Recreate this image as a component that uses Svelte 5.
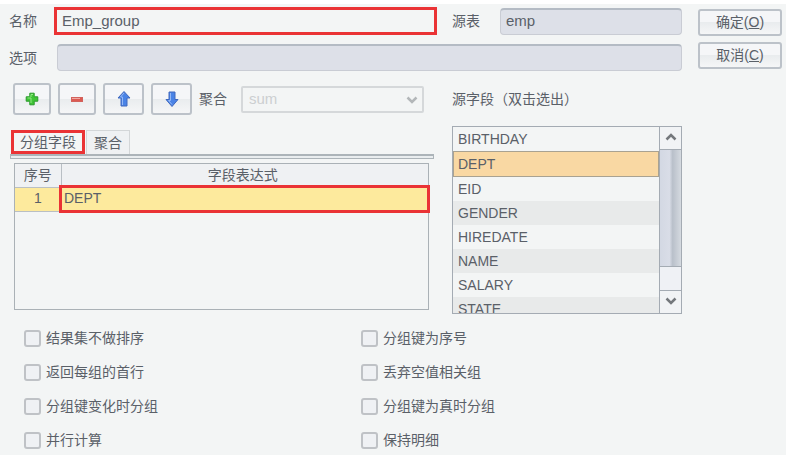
<script>
    let name = "Emp_group";
    let source = "emp";
    let option = "";
    let aggregate = "sum";
    let activeTab = "group";
    let selectedField = "DEPT";

    let groups = ["DEPT"];

    const fields = [
        "BIRTHDAY",
        "DEPT",
        "EID",
        "GENDER",
        "HIREDATE",
        "NAME",
        "SALARY",
        "STATE",
    ];

    let options = [
        { id: "o", label: "结果集不做排序", checked: false },
        { id: "n", label: "分组键为序号", checked: false },
        { id: "first", label: "返回每组的首行", checked: false },
        { id: "null", label: "丢弃空值相关组", checked: false },
        { id: "change", label: "分组键变化时分组", checked: false },
        { id: "true", label: "分组键为真时分组", checked: false },
        { id: "parallel", label: "并行计算", checked: false },
        { id: "detail", label: "保持明细", checked: false },
    ];

    function addGroup() {
        groups = [...groups, selectedField];
    }

    function removeGroup() {
        groups = groups.slice(0, -1);
    }

    function pickField(field) {
        groups = [...groups, field];
    }

    function handleKeydown(e, field) {
        if (e.key === "Enter") {
            pickField(field);
        }
    }
</script>

<div class="dialog">
    <div class="main">
        <div class="row name-row">
            <div class="field">
                <label for="name">名称</label>
                <input id="name" class="marked" type="text" bind:value={name} />
            </div>
            <div class="field source">
                <label for="source">源表</label>
                <input id="source" type="text" value={source} readonly />
            </div>
        </div>

        <div class="field option-row">
            <label for="option">选项</label>
            <input id="option" type="text" value={option} readonly />
        </div>

        <div class="row tool-row">
            <div class="toolbar">
                <button class="tool" aria-label="增加" on:click={addGroup}>
                    <svg width="14" height="14" viewBox="0 0 14 14">
                        <path d="M4.800 1.200h4.400v3.600h3.600v4.400H9.200v3.600H4.800V9.200H1.200V4.800h3.600z" fill="#3fc435" stroke="#2a9a2c" stroke-linejoin="round" />
                        <path d="M6 11V6H2.500M6 5V2.500h2" fill="none" stroke="#92e884" />
                    </svg>
                </button>
                <button class="tool" aria-label="删除" on:click={removeGroup}>
                    <svg width="14" height="14" viewBox="0 0 14 14">
                        <rect x="1.500" y="5.500" width="11" height="4" fill="#dc5a52" stroke="#d2625c" />
                        <path d="M2 6.500h8" stroke="#f0a8a2" />
                    </svg>
                </button>
                <button class="tool wide" aria-label="上移">
                    <svg width="16" height="18" viewBox="0 0 16 18">
                        <path d="M8 1.500l6 6.500h-3v8H5V8H2z" fill="#4a83e6" stroke="#4068bd" stroke-linejoin="round" />
                        <path d="M8 3L4.500 7H6.500v8" fill="none" stroke="#94b8f5" />
                    </svg>
                </button>
                <button class="tool wide" aria-label="下移">
                    <svg width="16" height="18" viewBox="0 0 16 18">
                        <path d="M5 2h6v7.500h3L8 16.500 2 9.500h3z" fill="#4a83e6" stroke="#4068bd" stroke-linejoin="round" />
                        <path d="M6.500 3v7.500H4.500L8 14.500" fill="none" stroke="#94b8f5" />
                    </svg>
                </button>
                <label for="aggregate">聚合</label>
                <div class="combo">
                    <select id="aggregate" bind:value={aggregate} disabled>
                        <option value="sum">sum</option>
                        <option value="count">count</option>
                    </select>
                    <svg class="combo-arrow" width="12" height="8" viewBox="0 0 12 8">
                        <path d="M1.500 1.500L6 6l4.500-4.500" fill="none" stroke="#b3b7b9" stroke-width="2.500" />
                    </svg>
                </div>
            </div>
            <div class="side" id="fields-title">源字段（双击选出）</div>
        </div>

        <div class="row lists">
            <div class="tab-panel">
                <div class="tabs" role="tablist">
                    <button
                        role="tab"
                        class="tab marked"
                        aria-selected={activeTab === "group"}
                        on:click={() => (activeTab = "group")}>分组字段</button
                    >
                    <button
                        role="tab"
                        class="tab"
                        aria-selected={activeTab === "aggregate"}
                        on:click={() => (activeTab = "aggregate")}>聚合</button
                    >
                </div>
                <div class="tab-edge"></div>
                <div class="table-box">
                    <table>
                        <thead>
                            <tr>
                                <th class="index">序号</th>
                                <th>字段表达式</th>
                            </tr>
                        </thead>
                        <tbody>
                            {#each groups as group, i}
                                <tr>
                                    <td class="index">{i + 1}</td>
                                    <td class="expression">{group}</td>
                                </tr>
                            {/each}
                        </tbody>
                    </table>
                </div>
            </div>

            <div class="side field-box">
                <ul class="fields" role="listbox" aria-labelledby="fields-title">
                    {#each fields as field (field)}
                        <li
                            role="option"
                            tabindex="0"
                            aria-selected={field === selectedField}
                            class:selected={field === selectedField}
                            on:click={() => (selectedField = field)}
                            on:dblclick={() => pickField(field)}
                            on:keydown={(e) => handleKeydown(e, field)}
                        >
                            {field}
                        </li>
                    {/each}
                </ul>
                <div class="scrollbar">
                    <button aria-label="向上滚动">
                        <svg width="12" height="8" viewBox="0 0 12 8">
                            <path d="M1.500 6.500L6 2l4.500 4.500" fill="none" stroke="#74787c" stroke-width="2.500" />
                        </svg>
                    </button>
                    <div class="thumb"></div>
                    <div class="track"></div>
                    <button aria-label="向下滚动">
                        <svg width="12" height="8" viewBox="0 0 12 8">
                            <path d="M1.500 1.500L6 6l4.500-4.500" fill="none" stroke="#74787c" stroke-width="2.500" />
                        </svg>
                    </button>
                </div>
            </div>
        </div>

        <div class="options">
            {#each options as item (item.id)}
                <label class="check">
                    <input type="checkbox" bind:checked={item.checked} />
                    <span>{item.label}</span>
                </label>
            {/each}
        </div>
    </div>

    <div class="actions">
        <button>确定(<u>O</u>)</button>
        <button>取消(<u>C</u>)</button>
    </div>
</div>

<style>
    :global(body) {
        background: #f3f5f5;
    }

    .dialog {
        display: flex;
        gap: 16px;
        padding: 3px 4px 0 9px;
        border-top: 4px solid #fff;
        background: #f3f5f5;
        color: #5a6068;
        font-family: "Liberation Sans", "Noto Sans CJK SC", sans-serif;
        font-size: 14px;
        line-height: 20px;
    }

    .dialog * {
        box-sizing: border-box;
    }

    button,
    input,
    select {
        margin: 0;
        color: inherit;
        font: inherit;
    }

    .main {
        flex: 1;
        min-width: 0;
    }

    .row {
        display: flex;
        gap: 15px;
    }

    .side {
        flex: none;
        width: 230px;
    }

    .field {
        display: flex;
        align-items: center;
        flex: 1;
        min-width: 0;
    }

    .field label {
        flex: none;
        width: 45px;
    }

    .field input {
        flex: 1;
        min-width: 0;
        height: 27px;
        padding: 0 5px 2px;
        border: 1px solid #c9ccd4;
        border-top: 2px solid #b4bbc4;
        border-radius: 4px;
        background: #dde0e8;
        font-size: 15px;
    }

    .field input.marked {
        height: 28px;
        border: 3px solid #ea3335;
        border-radius: 0;
        background: #f3f5f5;
    }

    .field.source {
        flex: none;
        width: 230px;
    }

    .source label,
    .option-row label {
        width: 48px;
    }

    .option-row {
        margin-top: 9px;
    }

    .tool-row {
        align-items: center;
        margin-top: 12px;
    }

    .toolbar {
        display: flex;
        align-items: center;
        gap: 7px;
        flex: 1;
        min-width: 0;
        padding: 0 13px 0 4px;
    }

    .tool,
    .actions button {
        display: flex;
        align-items: center;
        justify-content: center;
        padding: 0;
        border: 2px solid #bcc2c9;
        border-radius: 3px;
        background: linear-gradient(#f5f6f8 50%, #e9ecee 50%, #f5f6f7);
    }

    .tool {
        flex: none;
        width: 38px;
        height: 32px;
    }

    .tool.wide {
        width: 41px;
    }

    .toolbar label {
        flex: none;
    }

    .combo {
        position: relative;
        flex: 1;
        margin-left: 7px;
    }

    .combo select {
        display: block;
        width: 100%;
        height: 27px;
        padding: 0 6px;
        border: 2px solid #d5d8da;
        border-radius: 2px;
        background: #f3f5f5;
        color: #cccfd1;
        font-size: 15px;
        opacity: 1;
        appearance: none;
    }

    .combo-arrow {
        position: absolute;
        top: 10px;
        right: 6px;
        pointer-events: none;
    }

    .lists {
        margin-top: 11px;
    }

    .tab-panel {
        display: flex;
        flex-direction: column;
        flex: 1;
        min-width: 0;
        padding: 4px 3px 4px 1px;
    }

    .tabs {
        display: flex;
        gap: 1px;
        padding-left: 1px;
    }

    .tab {
        height: 24px;
        padding: 0 7px;
        border: 1px solid #d3d6d8;
        border-bottom: 0;
        background: #eff1f3;
        line-height: 20px;
    }

    .tab.marked {
        padding: 0 6px;
        border: 3px solid #ea3335;
        background: #f3f5f5;
        line-height: 18px;
    }

    .tab-edge {
        height: 5px;
        border: 1px solid #acb4b9;
        border-top-width: 2px;
        background: #e9edef;
    }

    .table-box {
        flex: 1;
        margin: 4px 5px 0 4px;
        border: 1px solid #aab1b6;
    }

    table {
        width: 100%;
        border-collapse: collapse;
        table-layout: fixed;
    }

    th {
        height: 23px;
        padding: 0;
        border-right: 1px solid #b9bfc4;
        border-bottom: 1px solid #b9bfc4;
        background: #eff1f3;
        font-weight: normal;
        text-align: center;
    }

    th:last-child {
        border-right: 0;
        padding-right: 4px;
    }

    td {
        height: 24px;
        padding: 0 3px 2px;
        border-bottom: 1px solid #b9bfc4;
        background: #fdea9d;
    }

    .index {
        width: 46px;
        text-align: center;
    }

    .expression {
        outline: 3px solid #ea3335;
        outline-offset: -1px;
    }

    .field-box {
        display: flex;
        height: 188px;
        border: 1px solid #a4abb3;
    }

    .fields {
        flex: 1;
        margin: 0;
        padding: 0;
        overflow: hidden;
        list-style: none;
        line-height: 24px;
    }

    .fields li {
        padding: 0 5px;
    }

    .fields li:nth-child(even) {
        background: #e8eaea;
    }

    .fields li.selected {
        padding: 0 4px;
        border: 1px solid #a9a291;
        background: #f9d8a3;
    }

    .scrollbar {
        display: flex;
        flex-direction: column;
        width: 22px;
        border-left: 1px solid #a4abb3;
    }

    .scrollbar button {
        display: flex;
        align-items: center;
        justify-content: center;
        height: 22px;
        padding: 0 0 3px;
        border: 0;
        background: #f1f3f5;
    }

    .thumb {
        flex: 5;
        border-top: 1px solid #a4abb3;
        border-bottom: 1px solid #a4abb3;
        background: linear-gradient(90deg, #d3d8e3, #d9dde7 45%, #b9c0ca 60%, #d5dae0);
    }

    .track {
        flex: 1;
        border-bottom: 1px solid #a4abb3;
        background: #eff1f5;
    }

    .options {
        display: grid;
        grid-template-columns: 1fr 1fr;
        gap: 14px 16px;
        margin-top: 14px;
        padding-left: 15px;
    }

    .check {
        display: flex;
        align-items: center;
        gap: 5px;
    }

    .check input {
        width: 17px;
        height: 17px;
        border: 2px solid #bfc2c6;
        border-radius: 3px;
        background: #eff1f4;
        appearance: none;
    }

    .check input:checked {
        background: #7f8ca0;
    }

    .actions {
        flex: none;
        display: flex;
        flex-direction: column;
        gap: 6px;
        width: 84px;
        padding-top: 2px;
    }

    .actions button {
        height: 27px;
        padding-bottom: 2px;
        white-space: pre;
    }
</style>
